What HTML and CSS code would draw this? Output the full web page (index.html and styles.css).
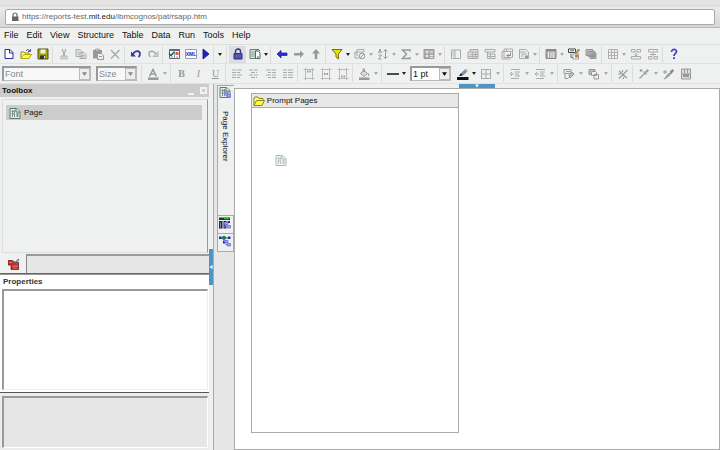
FILE: index.html
```html
<!DOCTYPE html>
<html lang="en">
<head>
<meta charset="utf-8">
<title>Report Studio</title>
<link rel="stylesheet" href="styles.css">
</head>
<body>
<svg class="defs" aria-hidden="true">
  <symbol id="caret" viewBox="0 0 4 3"><path d="M0 0h4L2 3z"/></symbol>
  <symbol id="new" viewBox="0 0 12 12"><path d="M2 1.500h5L10 4.500v6H2z" fill="#fff" stroke="#2a2a9c"/><path d="M6.500 1v4H10" fill="none" stroke="#2a2a9c"/></symbol>
  <symbol id="open" viewBox="0 0 12 12"><path d="M1 10.500V4h3l1 1h4v2" fill="#ff9" stroke="#9a8a10"/><path d="M1 10.500L3.500 6.500H11.500L9 10.500z" fill="#ff3" stroke="#b5a51c"/><path d="M6 2.500q2-2 4 .5M10.500 1v2.500H8" fill="none" stroke="#459"/></symbol>
  <symbol id="save" viewBox="0 0 12 12"><path d="M1 1h10v10H1z" fill="#a6a600" stroke="#555510"/><path d="M3.500 1.500h5v4h-5z" fill="#eee"/><path d="M3 7.500h6V11H3z" fill="#333"/><path d="M7 8h1.500v2.500H7z" fill="#ddd"/></symbol>
  <symbol id="cut" viewBox="0 0 12 12"><path d="M4 1l3 7M8 1L5 8" fill="none" stroke="#aaa" stroke-width="1.200"/><circle cx="4" cy="9.500" r="1.500" fill="none" stroke="#aaa"/><circle cx="8" cy="9.500" r="1.500" fill="none" stroke="#aaa"/></symbol>
  <symbol id="copy" viewBox="0 0 12 12"><path d="M1 1.500h4l2 2v5H1zM5 4.500h4l2 2v4H5z" fill="#e8e8e8" stroke="#aaa"/><path d="M2.500 4h2M2.500 6h2M6.500 7.500h3M6.500 9h3" stroke="#aaa"/></symbol>
  <symbol id="paste" viewBox="0 0 12 12"><path d="M1 2h9v8.500H1z" fill="#999"/><path d="M3.500 1h4v2h-4z" fill="#ccc" stroke="#888" stroke-width=".6"/><path d="M5.500 5.500h4l2 2v4h-6z" fill="#eee" stroke="#999"/><path d="M7 8.500h3" stroke="#999"/></symbol>
  <symbol id="delete" viewBox="0 0 12 12"><path d="M2 2l8 8.500M10.500 2L2 10.500" stroke="#aaa" stroke-width="1.400"/></symbol>
  <symbol id="undo" viewBox="0 0 12 12"><path d="M3 6.500C4.500 2.500 9.500 2 10 5.500q.2 2-1.500 3.500" fill="none" stroke="#3a3a9c" stroke-width="1.700"/><path d="M1 3.500v5h5z" fill="#3a3a9c"/></symbol>
  <symbol id="redo" viewBox="0 0 12 12"><path d="M9 6.500C7.500 2.500 2.500 2 2 5.500q-.2 2 1.500 3.500" fill="none" stroke="#aaa" stroke-width="1.500"/><path d="M11 3.500V8.500H6z" fill="#ccc" stroke="#aaa" stroke-width=".7"/></symbol>
  <symbol id="validate" viewBox="0 0 12 12"><path d="M1.500 1.500h10v9h-10z" fill="#fff" stroke="#667"/><path d="M1.500 1h10v2h-10z" fill="#668"/><path d="M6.500 3v7" stroke="#99a"/><path d="M1 5.500l2 2L6 4" fill="none" stroke="#087a35" stroke-width="1.600"/><path d="M7.500 4h3v3h-3z" fill="#d55"/><path d="M3 9h2M8 9h2" stroke="#99a"/></symbol>
  <symbol id="run" viewBox="0 0 12 12"><path d="M3 1l6 5-6 5z" fill="#2222cc" stroke="#10107a" stroke-width=".8"/></symbol>
  <symbol id="lock" viewBox="0 0 12 12"><path d="M3.500 6V3.500a2.500 2.500 0 015 0V6" fill="none" stroke="#333377" stroke-width="1.400"/><path d="M2 5.500h8V11H2z" fill="#4a4aa4" stroke="#33337a"/><path d="M3 7h6M3 9h6" stroke="#7777bd" stroke-width=".6"/></symbol>
  <symbol id="report" viewBox="0 0 12 12"><path d="M1 1.500h6v9H1z" fill="#ddd" stroke="#678577"/><path d="M6.500 3h3l1.500 2v5.500H6.500z" fill="#fff" stroke="#567"/><path d="M3 3v6M5 3v6" stroke="#8aa898"/><path d="M7 2q2-2 4 1M8 9h2" stroke="#098050" fill="none"/></symbol>
  <symbol id="left" viewBox="0 0 12 12"><path d="M1 6l4-3.500V5h6v2.500H5V10z" fill="#2c2cda" stroke="#1b1b8c" stroke-width=".7"/></symbol>
  <symbol id="right" viewBox="0 0 12 12"><path d="M11 6L7 2.500V5H1v2.500h6V10z" fill="#999"/></symbol>
  <symbol id="up" viewBox="0 0 12 12"><path d="M6 1L2 5.500h2.700V11h2.600V5.500H10z" fill="#999"/></symbol>
  <symbol id="filter" viewBox="0 0 12 12"><path d="M1 1.500h10L7.500 6v5L5 9V6z" fill="#e8e000" stroke="#77720f"/></symbol>
  <symbol id="suppress" viewBox="0 0 12 12"><path d="M1 6V4h9V1.500H3V8" fill="none" stroke="#aaa"/><path d="M1 5v5h4" fill="none" stroke="#aaa"/><circle cx="8" cy="8" r="2.800" fill="#eee" stroke="#999"/><path d="M6 10l4-4" stroke="#999"/></symbol>
  <symbol id="sort" viewBox="0 0 12 12"><path d="M1.500 5L3 1l1.500 4M2 4h2M1.500 7h3l-3 4h3M8.500 1v9M6.500 8.500l2 2 2-2M6.500 3.500l2-2 2 2" fill="none" stroke="#999"/></symbol>
  <symbol id="sum" viewBox="0 0 12 12"><path d="M10 3.500V2H2.500l4 4-4 4.500H10V9" fill="none" stroke="#999" stroke-width="1.500"/></symbol>
  <symbol id="calc" viewBox="0 0 12 12"><path d="M1 1.500h10v9H1z" fill="#aaa" stroke="#999"/><path d="M2.500 4h3M4 2.500v3M7 4h3M3 7l2 2M5 7L3 9M7 7.500h3M7 9.500h3" stroke="#eee"/></symbol>
  <symbol id="panel" viewBox="0 0 12 12"><path d="M1.500 2h9v8.500h-9zM5 2v8.500M2.500 4H4M2.500 6H4M2.500 8H4" fill="none" stroke="#aaa"/></symbol>
  <symbol id="section" viewBox="0 0 12 12"><path d="M3 1.500h8v9H1V4h2z" fill="#ddd" stroke="#aaa"/><path d="M3 4h8M3 6.500h8M1 8.500h10M5.500 4v6M8.500 4v6" stroke="#aaa" stroke-width=".8"/></symbol>
  <symbol id="header" viewBox="0 0 12 12"><path d="M1 1.500h10v2.500H1zM3.500 4v6.500H11V6H3.500M6.500 6v4.500M4 8.500h7" fill="none" stroke="#aaa"/></symbol>
  <symbol id="swap" viewBox="0 0 12 12"><path d="M1 3.500V11h8.500M1 3.500h2M3 1v8.500h8.500V1zM3 3.500h8.500M5.500 1v2" fill="none" stroke="#aaa"/><path d="M9.500 4.500v3H6m1.500-1.500L6 7.500 7.500 9" fill="none" stroke="#888"/></symbol>
  <symbol id="sheet" viewBox="0 0 12 12"><path d="M1.500 1.500h6L10.500 4v6.500h-9zM1.500 4h6M3 6h6M3 8h3" fill="none" stroke="#aaa"/><path d="M7 7.500h3V10H7z" fill="#999"/></symbol>
  <symbol id="columns" viewBox="0 0 12 12"><path d="M1 1.500h10v9H1z" fill="#aaa" stroke="#888"/><path d="M1 2.500h10" stroke="#888"/><path d="M3.500 4v6M6 4v6" stroke="#eee"/><path d="M7.500 4h2v6h-2z" fill="#ddd"/></symbol>
  <symbol id="build" viewBox="0 0 12 12"><path d="M.5 1h7v3.500h-7z" fill="#fff" stroke="#444"/><path d="M2 2.800h4M3 5.500v4h3" stroke="#667" fill="none"/><path d="M5 6h5.500v5H5z" fill="#fff" stroke="#99a"/><path d="M7 7h3v2.500H7z" fill="#f60"/><path d="M7 5l3.500-4 1 1L8.500 6z" fill="#bbb13b" stroke="#887"/></symbol>
  <symbol id="cards" viewBox="0 0 12 12"><path d="M1 1.500h7v6H1zM3 3.500h7v5H3zM5 5h6v5.500H5z" fill="#bbb" stroke="#999"/><path d="M7 6v4M9 6v4" stroke="#888"/></symbol>
  <symbol id="grid" viewBox="0 0 12 12"><path d="M1.500 1.500h9v9h-9zM4.500 1.500v9M7.500 1.500v9M1.500 4.500h9M1.500 7.500h9" fill="none" stroke="#aaa" stroke-width=".9"/></symbol>
  <symbol id="split" viewBox="0 0 12 12"><path d="M1.500 1.500h3.500v2.500H1.500zM7 1.500h3.500v2.500H7zM1.500 8.500h9v2.500h-9zM6 4v4M4.500 6.500L6 8l1.500-1.500" fill="none" stroke="#aaa"/></symbol>
  <symbol id="merge" viewBox="0 0 12 12"><path d="M1.500 1.500h9v2.500h-9zM1.500 8.500H5v2.500H1.500zM7 8.500h3.500v2.500H7zM6 4v4M3 6.500h6" fill="none" stroke="#aaa"/></symbol>
  <symbol id="help" viewBox="0 0 12 12"><path d="M3.500 4C3.500.5 8.800.8 8.500 3.800 8.300 5.500 6 5.500 6 8" fill="none" stroke="#4c46cf" stroke-width="1.800"/><path d="M5 9.300h2V11H5z" fill="#4c46cf"/></symbol>
  <symbol id="color" viewBox="0 0 12 12"><path d="M2.500 8.500L6 1.500l3.500 7M4 6h4" fill="none" stroke="#999" stroke-width="1.500"/><path d="M1 9.500h10.500V12H1z" fill="#999"/></symbol>
  <symbol id="al" viewBox="0 0 12 12"><path d="M1 2h4M1 4.500h4M1 7h4M1 9.500h4M6 2h5M6 4.500h3M6 7h5M6 9.500h3" stroke="#aaa" stroke-width="1.200"/></symbol>
  <symbol id="ac" viewBox="0 0 12 12"><path d="M1 2h10M3 4.500h6M1 7h10M3 9.500h6" stroke="#aaa" stroke-width="1.200" stroke-dasharray="4 1"/></symbol>
  <symbol id="ar" viewBox="0 0 12 12"><path d="M1 2h5M3 4.500h3M1 7h5M3 9.500h3M7 2h4M7 4.500h4M7 7h4M7 9.500h4" stroke="#aaa" stroke-width="1.200"/></symbol>
  <symbol id="aj" viewBox="0 0 12 12"><path d="M1 2h4M1 4.500h4M1 7h4M1 9.500h4M6 2h5M6 4.500h5M6 7h5M6 9.500h5" stroke="#aaa" stroke-width="1.200"/></symbol>
  <symbol id="vt" viewBox="0 0 12 12"><path d="M2.500 0v12M9.500 0v12M.5 1.500h11M.5 10.500h11" fill="none" stroke="#bbb"/><path d="M4 3.500h4" stroke="#999" stroke-dasharray="1 .5" stroke-width="2"/></symbol>
  <symbol id="vm" viewBox="0 0 12 12"><path d="M2.500 0v12M9.500 0v12M.5 1.500h11M.5 10.500h11" fill="none" stroke="#bbb"/><path d="M4 6h4" stroke="#999" stroke-dasharray="1 .5" stroke-width="2"/></symbol>
  <symbol id="vb" viewBox="0 0 12 12"><path d="M2.500 0v12M9.500 0v12M.5 1.500h11M.5 10.500h11" fill="none" stroke="#bbb"/><path d="M4 8.500h4" stroke="#999" stroke-dasharray="1 .5" stroke-width="2"/></symbol>
  <symbol id="fill" viewBox="0 0 12 12"><path d="M2.500 5.500L6 2.500l3.500 3L6 8.500zM5 4V1h1.500v3" fill="#ddd" stroke="#999"/><path d="M10 5l1 3" stroke="#999"/><path d="M1 9.500h10.500V12H1z" fill="#999"/></symbol>
  <symbol id="line" viewBox="0 0 12 12"><path d="M0 6h12" stroke="#222" stroke-width="1.600"/></symbol>
  <symbol id="pen" viewBox="0 0 12 12"><path d="M2 8L4 5l2 2-2 1z" fill="#222"/><path d="M4.500 5L9 1l2 1.500-5 4.500z" fill="#6b9ee9" stroke="#468" stroke-width=".6"/><path d="M8 2l1.500-1 2 1.500-1 1z" fill="#fd6"/><path d="M0 9h11.500v3H0z" fill="#111"/></symbol>
  <symbol id="border" viewBox="0 0 12 12"><path d="M1.500 1.500h9v9h-9zM6 1.500v9M1.500 6h9" fill="none" stroke="#aaa"/></symbol>
  <symbol id="indent" viewBox="0 0 12 12"><path d="M2 1.500h9M6 4h5M6 6h4M6 8h5M2 10.500h8M5 6H1M3 4L1 6l2 2" fill="none" stroke="#aaa"/></symbol>
  <symbol id="format" viewBox="0 0 12 12"><path d="M1 1.500h7v4H1zM2 5.500v5h3l5-5-2-2" fill="none" stroke="#999"/><path d="M6 7l3-3 2 2-4 4z" fill="#bbb" stroke="#999"/><path d="M3 3.500h4" stroke="#999"/></symbol>
  <symbol id="style" viewBox="0 0 12 12"><path d="M1 1.500h6v5H1z" fill="#bbb" stroke="#999"/><path d="M3.500 3.500h4l1 1v3h-5zM6 6.500h4.500V11H6z" fill="#eee" stroke="#999"/></symbol>
  <symbol id="wand" viewBox="0 0 12 12"><path d="M2 10.500L10.500 2M2 3l8 7M1 6h3M5 2l1 2M7 9l-1 2" fill="none" stroke="#999" stroke-width="1.200"/></symbol>
  <symbol id="dropper" viewBox="0 0 12 12"><path d="M1.500 10.500L7 5M5.500 3.500l3 3M3 1v3M1.500 2.500h3" stroke="#999" stroke-width="1.200"/><path d="M7 4l2.500-3L11 2.500 8.500 5z" fill="#999"/></symbol>
  <symbol id="paint" viewBox="0 0 12 12"><path d="M1.500 11L5 6l3-1-2 3zM2 2v4M0 4h4" fill="#aaa" stroke="#999"/><path d="M6.500 4L9.500 1 11 2.500 8.500 6z" fill="#888"/></symbol>
  <symbol id="cond" viewBox="0 0 12 12"><path d="M1.500 1h9v10h-9zM1.500 6h9M4.500 1v4M7.500 1v4" fill="#ddd" stroke="#999"/><path d="M3 6h6v3H3z" fill="#999"/></symbol>
  <symbol id="page" viewBox="0 0 12 12"><path d="M1 1.500h6.500L11 4.500v7H1z" fill="#e4eae6" stroke="#607a6c"/><path d="M7 1.500V5h4" fill="#fff" stroke="#16884e"/><path d="M3.500 3v7M5.500 3v7M2.500 4.500h3M2.500 7h3M7 7h3M7 9h3M8.500 6v4" stroke="#80908a"/></symbol>
  <symbol id="badge" viewBox="0 0 12 12"><path d="M5.500 5.500h3.500v2H6zM7 7.500V10h2M8.500 8.500h3v2.500h-3z" fill="#aaaaf4" stroke="#7a7ae2"/></symbol>
  <symbol id="query" viewBox="0 0 12 12"><path d="M0 .5h11V3H0z" fill="#064a12"/><path d="M5 1h5v1.300H5z" fill="#29b32a"/><path d="M0 4h3.500v7.500H0zM4.500 4h3v7.500h-3z" fill="#24245a"/><path d="M1.500 5.500v5M6 5.500v5" stroke="#7c8cb0"/><path d="M8.500 4h2.500v2H8.500z" fill="#334"/></symbol>
  <symbol id="map" viewBox="0 0 12 12"><path d="M1 3h9M5 3v4" stroke="#333366"/><path d="M0 1.500h2.500V4H0z" fill="#2929b4"/><circle cx="5" cy="2.800" r="2" fill="#168037"/><path d="M9 1.500h2.500V4H9zM4 6h2v2.500H4z" fill="#2929b4"/></symbol>
  <symbol id="folder" viewBox="0 0 12 12"><path d="M1 10.500V3l1-1h3l1 1.500h4V5" fill="#ff8" stroke="#8c8218"/><path d="M1 10.500L3.500 5.500h8L9 10.500z" fill="#ffff45" stroke="#8c8218"/></symbol>
  <symbol id="tools" viewBox="0 0 12 12"><path d="M0 2.500h4.500l1 2h5v7H3V7H0z" fill="#bd3026" stroke="#71251f" stroke-width=".8"/><path d="M1 4.500h3M4 8h6M5 10h4" stroke="#e87868"/><path d="M5.500 3L7 4.500l1.500-1L11 1M8 6l3-2" stroke="#667" stroke-width="1.200" fill="none"/></symbol>
</svg>

<header class="browser">
  <div class="address">
    <svg class="padlock" viewBox="0 0 8 10" aria-hidden="true"><path d="M2 5V3a2 2 0 014 0v2" fill="none" stroke="#666" stroke-width="1.200"/><path d="M1 4.500h6.500V9H1z" fill="#666"/></svg>
    <span>https://reports-test.<b>mit.edu</b>/ibmcognos/pat/rsapp.htm</span>
  </div>
</header>

<nav class="menu">
  <button>File</button><button>Edit</button><button>View</button><button>Structure</button><button>Table</button><button>Data</button><button>Run</button><button>Tools</button><button>Help</button>
</nav>

<div class="toolbar" role="toolbar" aria-label="Standard">
  <div class="group">
    <button aria-label="New"><svg><use href="#new"/></svg></button><button aria-label="Open"><svg><use href="#open"/></svg></button><button aria-label="Save"><svg><use href="#save"/></svg></button>
  </div>
  <div class="group">
    <button aria-label="Cut"><svg><use href="#cut"/></svg></button><button aria-label="Copy"><svg><use href="#copy"/></svg></button><button aria-label="Paste"><svg><use href="#paste"/></svg></button><button aria-label="Delete"><svg><use href="#delete"/></svg></button>
  </div>
  <div class="group">
    <button aria-label="Undo"><svg><use href="#undo"/></svg></button><button aria-label="Redo"><svg><use href="#redo"/></svg></button>
  </div>
  <div class="group">
    <button aria-label="Validate"><svg><use href="#validate"/></svg></button><button aria-label="Show XML"><svg viewBox="0 0 12 12"><path d="M.5 1.500h11v9H.5z" fill="#fff" stroke="#9999bb"/><text x="6" y="8" text-anchor="middle" class="glyph-xml">XML</text></svg></button><button class="run" aria-label="Run report"><svg><use href="#run"/></svg></button><button class="more run-more" aria-label="Run options"><svg><use href="#caret"/></svg></button>
  </div>
  <div class="group">
    <button class="on" aria-label="Lock page objects"><svg><use href="#lock"/></svg></button><button aria-label="Page layout"><svg><use href="#report"/></svg></button><button class="more" aria-label="Layout options"><svg><use href="#caret"/></svg></button>
  </div>
  <div class="group">
    <button aria-label="Back"><svg><use href="#left"/></svg></button><button aria-label="Forward"><svg><use href="#right"/></svg></button><button aria-label="Up"><svg><use href="#up"/></svg></button>
  </div>
  <div class="group">
    <button aria-label="Filter"><svg><use href="#filter"/></svg></button><button class="more" aria-label="Filter options"><svg><use href="#caret"/></svg></button><button aria-label="Suppress"><svg><use href="#suppress"/></svg></button><button class="more off" aria-label="Suppress options"><svg><use href="#caret"/></svg></button><button aria-label="Sort"><svg><use href="#sort"/></svg></button><button class="more off" aria-label="Sort options"><svg><use href="#caret"/></svg></button><button aria-label="Aggregate"><svg><use href="#sum"/></svg></button><button class="more off" aria-label="Aggregate options"><svg><use href="#caret"/></svg></button><button aria-label="Calculate"><svg><use href="#calc"/></svg></button><button class="more off" aria-label="Calculate options"><svg><use href="#caret"/></svg></button>
  </div>
  <div class="group">
    <button aria-label="Group"><svg><use href="#panel"/></svg></button><button aria-label="Pivot"><svg><use href="#section"/></svg></button><button aria-label="Section"><svg><use href="#header"/></svg></button><button aria-label="Swap rows and columns"><svg><use href="#swap"/></svg></button><button aria-label="Headers and footers"><svg><use href="#sheet"/></svg></button><button class="more off" aria-label="Header options"><svg><use href="#caret"/></svg></button>
  </div>
  <div class="group wide">
    <button aria-label="Insert chart"><svg><use href="#columns"/></svg></button><button class="more off" aria-label="Chart options"><svg><use href="#caret"/></svg></button><button aria-label="Build prompt page"><svg><use href="#build"/></svg></button><button aria-label="Drill through"><svg><use href="#cards"/></svg></button>
  </div>
  <div class="group">
    <button aria-label="Table"><svg><use href="#grid"/></svg></button><button class="more off" aria-label="Table options"><svg><use href="#caret"/></svg></button><button aria-label="Merge cells"><svg><use href="#split"/></svg></button><button aria-label="Split cell"><svg><use href="#merge"/></svg></button>
  </div>
  <div class="group">
    <button aria-label="Help topics"><svg><use href="#help"/></svg></button>
  </div>
</div>

<div class="toolbar format" role="toolbar" aria-label="Style">
  <div class="picker font-picker"><select aria-label="Font"><option>Font</option></select><svg><use href="#caret"/></svg></div>
  <div class="picker"><select aria-label="Size"><option>Size</option></select><svg><use href="#caret"/></svg></div>
  <div class="group">
    <button aria-label="Foreground color"><svg><use href="#color"/></svg></button><button class="more off" aria-label="More colors"><svg><use href="#caret"/></svg></button>
  </div>
  <div class="group letters">
    <button><b>B</b></button><button><i>I</i></button><button><u>U</u></button>
  </div>
  <div class="group">
    <button aria-label="Align left"><svg><use href="#al"/></svg></button><button aria-label="Center"><svg><use href="#ac"/></svg></button><button aria-label="Align right"><svg><use href="#ar"/></svg></button><button aria-label="Justify"><svg><use href="#aj"/></svg></button>
  </div>
  <div class="group">
    <button aria-label="Top"><svg><use href="#vt"/></svg></button><button aria-label="Middle"><svg><use href="#vm"/></svg></button><button aria-label="Bottom"><svg><use href="#vb"/></svg></button>
  </div>
  <div class="group">
    <button aria-label="Background color"><svg><use href="#fill"/></svg></button><button class="more off" aria-label="More backgrounds"><svg><use href="#caret"/></svg></button>
  </div>
  <div class="group">
    <button aria-label="Border style"><svg><use href="#line"/></svg></button><button class="more" aria-label="More border styles"><svg><use href="#caret"/></svg></button>
  </div>
  <div class="picker live"><select aria-label="Border width"><option>1 pt</option></select><svg><use href="#caret"/></svg></div>
  <div class="group plain">
    <button aria-label="Border color"><svg><use href="#pen"/></svg></button><button class="more" aria-label="More border colors"><svg><use href="#caret"/></svg></button><button aria-label="Borders"><svg><use href="#border"/></svg></button><button class="more off" aria-label="More borders"><svg><use href="#caret"/></svg></button>
  </div>
  <div class="group">
    <button aria-label="Decrease indent"><svg><use href="#indent"/></svg></button><button class="more off" aria-label="Decrease options"><svg><use href="#caret"/></svg></button><button aria-label="Increase indent"><svg><use href="#indent"/></svg></button><button class="more off" aria-label="Increase options"><svg><use href="#caret"/></svg></button>
  </div>
  <div class="group">
    <button aria-label="Data format"><svg><use href="#format"/></svg></button><button class="more off" aria-label="Format options"><svg><use href="#caret"/></svg></button><button aria-label="Styles"><svg><use href="#style"/></svg></button><button class="more off" aria-label="Style options"><svg><use href="#caret"/></svg></button>
  </div>
  <div class="group">
    <button aria-label="Clear style"><svg><use href="#wand"/></svg></button>
  </div>
  <div class="group">
    <button aria-label="Pick up style"><svg><use href="#dropper"/></svg></button><button class="more off" aria-label="Pick up options"><svg><use href="#caret"/></svg></button><button aria-label="Apply style"><svg><use href="#paint"/></svg></button><button aria-label="Conditional styles"><svg><use href="#cond"/></svg></button>
  </div>
</div>

<main class="workspace">
  <aside class="side">
    <section class="toolbox">
      <header class="pane-head"><h2>Toolbox</h2><button class="minimize" aria-label="Minimize"></button><button class="maximize" aria-label="Maximize"></button></header>
      <div class="tool-list"><button class="tool"><svg><use href="#page"/></svg>Page</button></div>
      <div class="tool-tabs"><button aria-label="Toolbox tab"><svg><use href="#tools"/></svg></button><div class="tab-rest"></div></div>
    </section>
    <section class="properties">
      <h2>Properties</h2>
      <div class="property-list"></div>
    </section>
    <section class="details"><div class="detail-box"></div></section>
  </aside>
  <div class="splitter"><button aria-label="Collapse panes"><svg viewBox="0 0 4 6"><path d="M3.500 1v4L.5 3z" fill="#fff"/></svg></button></div>
  <nav class="explorer">
    <button class="current"><svg><use href="#page"/><use href="#badge"/></svg><span>Page Explorer</span></button>
    <button aria-label="Query Explorer"><svg><use href="#query"/><use href="#badge"/></svg></button>
    <button aria-label="Condition Explorer"><svg><use href="#map"/><use href="#badge"/></svg></button>
  </nav>
  <section class="canvas-area">
    <button class="collapse" aria-label="Collapse toolbars"><svg viewBox="0 0 6 4"><path d="M1 .5h4L3 3.500z" fill="#fff"/></svg></button>
    <div class="canvas">
      <article class="prompt">
        <h3><svg><use href="#folder"/></svg>Prompt Pages</h3>
        <div class="drop"><svg><use href="#page"/></svg></div>
      </article>
    </div>
  </section>
</main>
</body>
</html>
```
FILE: styles.css
```css
* { box-sizing: border-box; }

body {
  margin: 0;
  height: 100vh;
  display: flex;
  flex-direction: column;
  overflow: hidden;
  background: #eff0f0;
  color: #111;
  font: 9px/12px "Liberation Sans", Arial, sans-serif;
}

button {
  margin: 0;
  padding: 0;
  border: 0;
  background: none;
  color: inherit;
  font: inherit;
}

h2, h3 { margin: 0; font-size: 8px; line-height: 12px; }
svg { display: block; width: 12px; height: 12px; flex: none; }
.defs { position: absolute; width: 0; height: 0; }
.glyph-xml { font: bold 5px "Liberation Sans", sans-serif; fill: #22229c; }

/* Browser bar */
.browser {
  padding: 9px 5px 2px;
  border-bottom: 1px solid #b8b8b8;
  background: linear-gradient(#e4e4e4 5px, #d6d6d6 6px, #ebebeb 7px, #d6d6d6);
}
.address {
  display: flex;
  align-items: center;
  gap: 3px;
  height: 16px;
  padding: 0 5px;
  border: 1px solid #aaa;
  border-radius: 2px;
  background: #fff;
  color: #666;
  font-size: 8px;
}
.address b { color: #222; font-weight: normal; }
.padlock { width: 8px; height: 10px; }

/* Menu and toolbars */
.menu {
  display: flex;
  gap: 8px;
  padding: 1px 4px 3px;
  border-bottom: 1px solid #ddd;
}
.toolbar {
  display: flex;
  align-items: center;
  height: 19px;
  border-bottom: 1px solid #e2e2e2;
}
.group {
  display: flex;
  align-items: center;
  height: 17px;
}
.group + .group, .picker + .group {
  margin-left: 1px;
  padding-left: 2px;
  border-left: 1px solid #dcdcdc;
}
.group.wide { padding-right: 1px; }
.group button {
  display: flex;
  align-items: center;
  justify-content: center;
  width: 17px;
  height: 17px;
}
.group .run { width: 14px; }
.group .more { width: 6px; color: #222; }
.group .run-more { width: 12px; border-left: 1px solid #ddd; }
.group .off { color: #aaa; }
.group .on { background: #dcdce2; }
.more svg { width: 4px; height: 3px; fill: currentColor; }

.format { padding-left: 2px; height: 20px; }
.format .off { width: 8px; }
.letters { color: #999; font: 10px/12px "Liberation Serif", serif; }
.picker {
  position: relative;
  width: 41px;
  height: 15px;
  margin-left: 3px;
}
.font-picker { width: 89px; margin: 0 2px 0 0; }
.picker + .group { margin-left: 4px; }
.picker + .plain {
  margin-left: 3px;
  padding-left: 0;
  border-left: 0;
}
.picker select {
  appearance: none;
  width: 100%;
  height: 100%;
  padding: 0 0 0 1px;
  border: 1px solid #bbb;
  border-top: 2px solid #999;
  border-left: 2px solid #999;
  border-radius: 0;
  background: #f8f8f8;
  color: #888;
  font: inherit;
}
.picker svg {
  position: absolute;
  top: 2px;
  right: 1px;
  width: 11px;
  height: 12px;
  padding: 3px 2px;
  border: 1px solid #bbb;
  background: #eee;
  fill: #888;
  pointer-events: none;
}
.live select { background: #fff; color: #111; }
.live svg { fill: #111; }

/* Panes */
.workspace {
  flex: 1;
  min-height: 0;
  display: grid;
  grid-template-columns: 29% 5px 20px 1fr;
}
.side {
  min-height: 0;
  display: grid;
  grid-template-rows: 190fr 119fr 57fr;
}
.toolbox {
  display: flex;
  flex-direction: column;
  border-bottom: 1px solid #666;
}
.pane-head {
  display: flex;
  align-items: center;
  gap: 6px;
  height: 13px;
  padding: 0 2px;
  background: #ccc;
}
.pane-head h2 { flex: 1; }
.minimize { width: 6px; height: 8px; border-bottom: 2px solid #f2f2f2; }
.maximize { width: 7px; height: 7px; border: 2px solid #f2f2f2; }
.tool-list {
  flex: 1;
  margin: 2px 1px 0 2px;
  padding: 5px 5px 0 3px;
  border: 1px solid #ddd;
  border-right: 1px solid #999;
}
.tool {
  display: flex;
  align-items: center;
  gap: 3px;
  width: 100%;
  height: 15px;
  padding-left: 3px;
  background: #ccc;
  font-size: 8px;
}
.tool-tabs { display: flex; height: 20px; padding-top: 1px; }
.tool-tabs button { padding: 0 6px 0 8px; }
.tab-rest {
  flex: 1;
  border-top: 2px solid #999;
  border-left: 1px solid #888;
  background: #e6e6e6;
}
.properties {
  display: flex;
  flex-direction: column;
  padding-bottom: 2px;
  border-top: 1px solid #999;
  border-bottom: 1px solid #555;
  background: #fff;
}
.properties h2 { padding: 0 3px; color: #333; line-height: 14px; }
.property-list {
  flex: 1;
  margin: 0 1px 0 2px;
  border: 1px solid #eee;
  border-top: 2px solid #999;
  border-left: 2px solid #999;
}
.details { display: flex; padding: 3px 1px 2px 2px; background: #ececec; }
.detail-box {
  flex: 1;
  border: 1px solid #fff;
  border-top: 2px solid #999;
  border-left: 2px solid #999;
  background: #e6e6e6;
}
.splitter {
  display: grid;
  grid-template-rows: 165fr 36px 165fr;
  border-right: 1px solid #aaa;
}
.splitter button {
  grid-row: 2;
  display: flex;
  align-items: center;
  background: #4e95c5;
}
.splitter svg { width: 4px; height: 6px; }
.explorer {
  display: flex;
  flex-direction: column;
  padding: 1px 0 0 3px;
  background: #e6e6e6;
}
.explorer button {
  display: flex;
  flex-direction: column;
  align-items: flex-start;
  gap: 13px;
  height: 18px;
  padding: 1px 1px 0;
  border: 1px solid #aaa;
  border-top: 0;
  background: #eff0f0;
}
.explorer .current { height: 131px; border-top: 1px solid #aaa; border-right: 0; padding-top: 0; }
.explorer span { writing-mode: vertical-rl; font-size: 8px; }
.canvas-area { display: flex; flex-direction: column; min-height: 0; }
.collapse {
  display: flex;
  justify-content: center;
  width: 36px;
  height: 4px;
  align-self: center;
  background: #4e95c5;
}
.collapse svg { width: 6px; height: 4px; }
.canvas {
  flex: 1;
  padding: 4px 16px 16px;
  border: 1px solid #aaa;
  background: #fff;
}
.prompt {
  width: 46%;
  height: 100%;
  border: 1px solid #aaa;
}
.prompt h3 {
  display: flex;
  align-items: center;
  gap: 2px;
  height: 14px;
  padding-left: 1px;
  border-bottom: 1px solid #aaa;
  background: #e8e8e8;
  font-weight: normal;
}
.drop { padding: 46px 23px; }
.drop svg { opacity: .5; }
```
